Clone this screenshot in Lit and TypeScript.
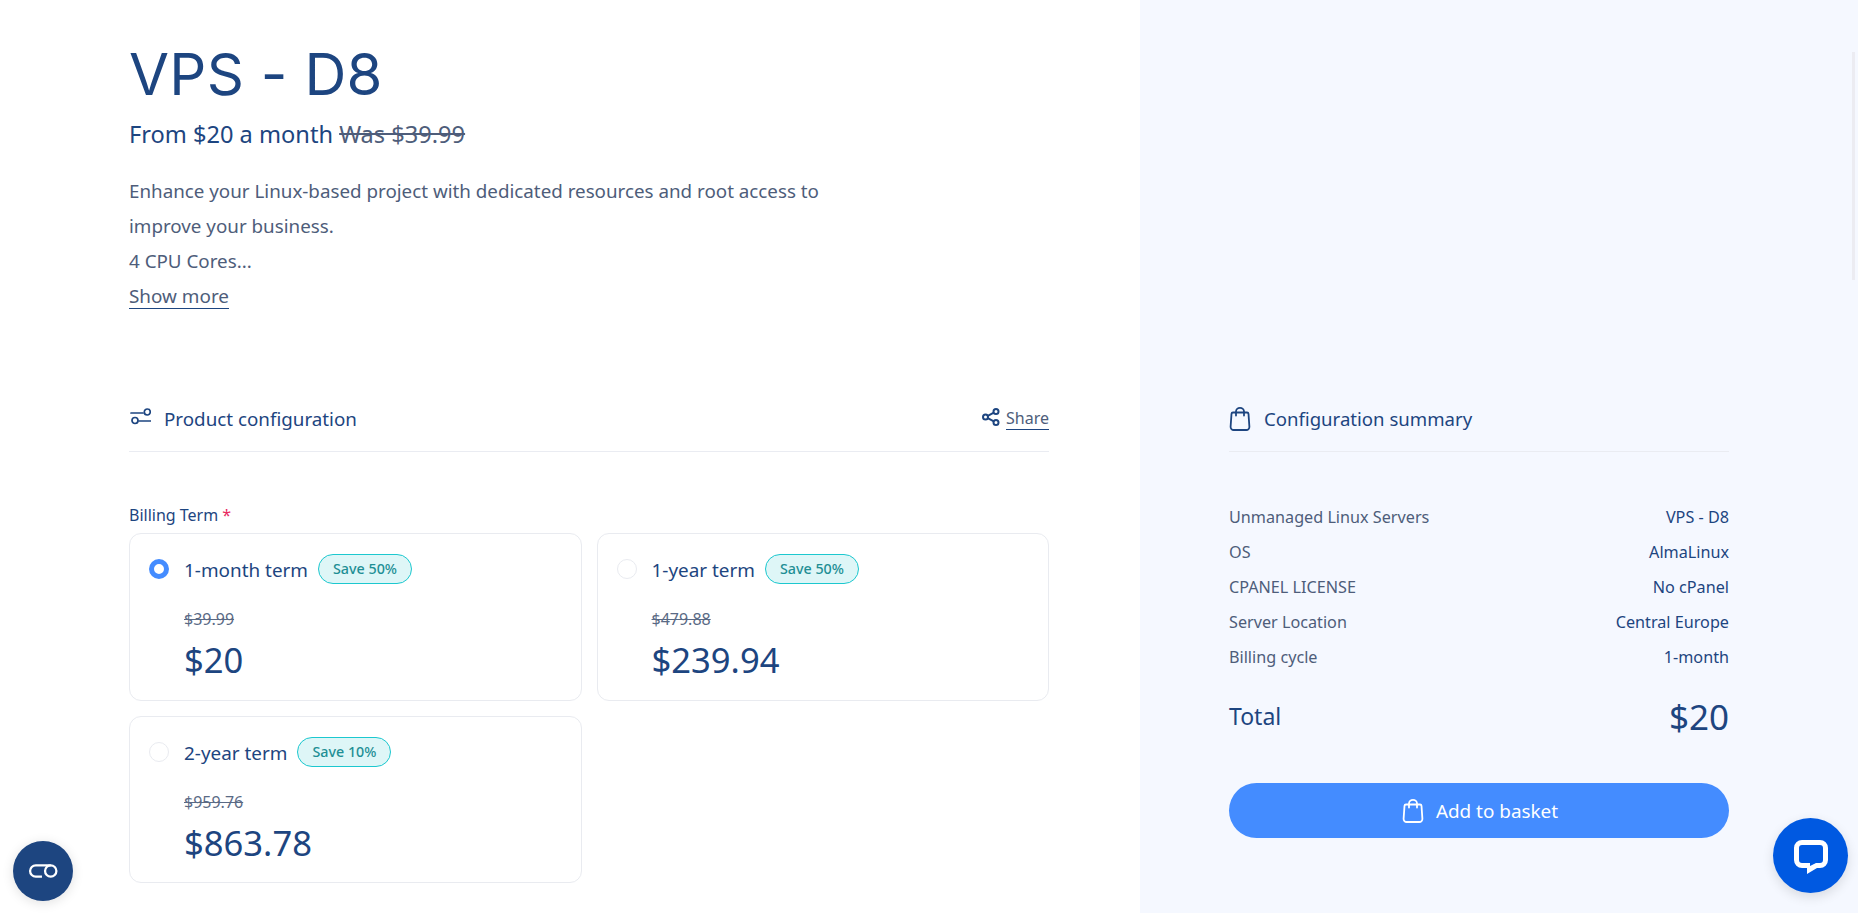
import { LitElement, css, html } from 'lit';
import { customElement } from 'lit/decorators.js';

const bagIcon = html`<svg class="bag" viewBox="0 0 22 24" fill="none" stroke="currentColor" stroke-width="1.8" stroke-linejoin="round" stroke-linecap="round">
  <path d="M4 5.500h14a1.500 1.500 0 0 1 1.500 1.400l.9 13a3 3 0 0 1-3 3.100H4.600a3 3 0 0 1-3-3.100l.9-13A1.500 1.500 0 0 1 4 5.500z" />
  <path d="M7 8.500V4.500a4 3.600 0 0 1 8 0v4" />
</svg>`;

const terms = [
  { name: '1-month term', save: 'Save 50%', was: '$39.99', price: '$20', selected: true },
  { name: '1-year term', save: 'Save 50%', was: '$479.88', price: '$239.94', selected: false },
  { name: '2-year term', save: 'Save 10%', was: '$959.76', price: '$863.78', selected: false },
];

const summary = [
  ['Unmanaged Linux Servers', 'VPS - D8'],
  ['OS', 'AlmaLinux'],
  ['CPANEL LICENSE', 'No cPanel'],
  ['Server Location', 'Central Europe'],
  ['Billing cycle', '1-month'],
];

@customElement('app-root')
export class AppRoot extends LitElement {
  render() {
    return html`
      <div class="page">
        <main class="main">
          <h1>VPS - D8</h1>
          <div class="sub">From $20 a month <s>Was $39.99</s></div>
          <p class="desc">Enhance your Linux-based project with dedicated resources and root access to improve your business.<br />4 CPU Cores...</p>
          <a class="more">Show more</a>

          <div class="section-head">
            <svg class="sliders" viewBox="0 0 21 17" fill="none" stroke="currentColor" stroke-width="1.700" stroke-linecap="round">
              <path d="M1 5h12" />
              <circle cx="17.300" cy="4" r="3" />
              <circle cx="5" cy="12.500" r="3" />
              <path d="M9 13H20.500" />
            </svg>
            <span class="head-title">Product configuration</span>
            <span class="share">
              <svg viewBox="0 0 18 18" fill="none" stroke="currentColor" stroke-width="2">
                <circle cx="14" cy="3.500" r="2.500" />
                <circle cx="3.500" cy="9" r="2.500" />
                <circle cx="14" cy="14.500" r="2.500" />
                <path d="M5.800 7.800l6-3.100M5.800 10.200l6 3.100" />
              </svg>
              <a>Share</a>
            </span>
          </div>

          <div class="field-label">Billing Term <span class="req">*</span></div>
          <div class="terms">
            ${terms.map(
              (t) => html`
                <div class="term">
                  <div class="term-top">
                    <span class="radio ${t.selected ? 'on' : ''}"></span>
                    <span class="term-name">${t.name}</span>
                    <span class="badge">${t.save}</span>
                  </div>
                  <div class="was"><s>${t.was}</s></div>
                  <div class="price">${t.price}</div>
                </div>
              `,
            )}
          </div>
        </main>

        <aside class="side">
          <div class="section-head">
            ${bagIcon}
            <span class="head-title wide">Configuration summary</span>
          </div>
          <div class="rows">
            ${summary.map(
              ([k, v]) => html`<div class="row"><span class="k">${k}</span><span class="v">${v}</span></div>`,
            )}
          </div>
          <div class="total"><span>Total</span><span class="total-price">$20</span></div>
          <button class="add">${bagIcon}<span>Add to basket</span></button>
          <div class="scroll-thumb"></div>
        </aside>
      </div>

      <div class="fab left">
        <svg viewBox="0 0 32 17" fill="none" stroke="currentColor" stroke-width="2.200">
          <path d="M14.500 14H8.500a5.500 5.500 0 0 1 0-11H23" />
          <circle cx="23" cy="8.500" r="5.500" />
        </svg>
      </div>
      <div class="fab chat">
        <svg viewBox="0 0 36 36">
          <path fill="#fff" fill-rule="evenodd" d="M9 1h18a8 8 0 0 1 8 8v12a8 8 0 0 1-8 8h-3l-10 6v-6H9a8 8 0 0 1-8-8V9a8 8 0 0 1 8-8zm0 5a3 3 0 0 0-3 3v12a3 3 0 0 0 3 3h8v3l6-3h4a3 3 0 0 0 3-3V9a3 3 0 0 0-3-3H9z" />
        </svg>
      </div>
    `;
  }

  static styles = css`
    :host {
      display: block;
      font-family: 'Noto Sans', sans-serif;
      color: #1d4580;
    }
    .page {
      display: flex;
      height: 913px;
      overflow: hidden;
    }
    .main {
      width: 1140px;
      box-sizing: border-box;
      padding: 40px 91px 0 129px;
    }
    .side {
      position: relative;
      flex: 1;
      box-sizing: border-box;
      padding: 386px 129px 0 89px;
      background: #f5f8ff;
    }
    h1 {
      margin: 0;
      font-family: Inter, sans-serif;
      font-size: 58px;
      font-weight: 400;
      line-height: 68px;
      letter-spacing: 0.3px;
    }
    .sub {
      margin-top: 9px;
      font-size: 23.600px;
      line-height: 34px;
    }
    .sub s {
      color: #4e5d7a;
    }
    .desc {
      margin: 23px 0 0;
      width: 700px;
      font-size: 18.800px;
      line-height: 35px;
      color: #4e5d7a;
    }
    .more {
      display: inline-block;
      margin-top: 5px;
      font-size: 18.900px;
      line-height: 24px;
      color: #4e5d7a;
      border-bottom: 1px solid #1d4580;
    }
    .section-head {
      display: flex;
      align-items: center;
      height: 66px;
      border-bottom: 1px solid #eaecf2;
      font-size: 18.800px;
      box-sizing: border-box;
    }
    .main .section-head {
      margin-top: 77px;
    }
    .head-title {
      margin-left: 12px;
      line-height: 24px;
    }
    .head-title.wide {
      margin-left: 13px;
      font-size: 18.600px;
    }
    .sliders {
      width: 21px;
      height: 17px;
      margin: -4px 1px 0 1px;
    }
    .bag {
      width: 22px;
      height: 24px;
    }
    .share {
      margin-left: auto;
      display: flex;
      align-items: center;
      gap: 6px;
      font-size: 16px;
      color: #4e5d7a;
    }
    .share svg {
      width: 18px;
      height: 18px;
      color: #1d4580;
      margin-top: -4px;
    }
    .share a {
      border-bottom: 1px solid #1d4580;
      line-height: 22px;
    }
    .field-label {
      margin-top: 51px;
      font-size: 16px;
      line-height: 24px;
    }
    .req {
      color: #e8295f;
    }
    .terms {
      display: grid;
      grid-template-columns: 1fr 1fr;
      grid-template-rows: 168px 167px;
      gap: 15px;
      margin-top: 6px;
    }
    .term {
      box-sizing: border-box;
      padding: 20px 19px 0;
      border: 1px solid #e9ebf0;
      border-radius: 12px;
      background: #fff;
    }
    .term-top {
      display: flex;
      align-items: center;
      height: 30px;
    }
    .radio {
      width: 20px;
      height: 20px;
      box-sizing: border-box;
      border: 1px solid #e9ebf0;
      border-radius: 50%;
      background: #fff;
    }
    .radio.on {
      border: 5.500px solid #448cff;
    }
    .term-name {
      margin-left: 15px;
      font-size: 18.900px;
      line-height: 24px;
      padding-top: 2px;
    }
    .badge {
      margin-left: 10px;
      height: 30px;
      box-sizing: border-box;
      padding: 0 14px;
      border: 1px solid #1cc8cf;
      border-radius: 15px;
      background: #def6f7;
      color: #1f8f95;
      font-size: 14.300px;
      font-weight: 500;
      line-height: 28px;
    }
    .was {
      margin: 23px 0 0 35px;
      font-size: 16px;
      line-height: 24px;
      color: #5a6a85;
    }
    .price {
      margin: 6px 0 0 35px;
      font-size: 34.600px;
      line-height: 46px;
    }
    .rows {
      margin-top: 47px;
    }
    .row,
    .total {
      display: flex;
      justify-content: space-between;
      align-items: center;
    }
    .row {
      height: 35px;
      font-size: 16.200px;
    }
    .k {
      color: #4e5d7a;
    }
    .total {
      margin-top: 19px;
      height: 46px;
      font-size: 23px;
    }
    .total-price {
      font-size: 35px;
    }
    .add {
      display: flex;
      align-items: center;
      justify-content: center;
      gap: 12px;
      width: 100%;
      height: 55px;
      margin-top: 44px;
      padding: 0 0 0 2px;
      border: 0;
      border-radius: 28px;
      background: #448cff;
      color: #fff;
      font-family: inherit;
      font-size: 18.900px;
    }
    .scroll-thumb {
      position: absolute;
      top: 52px;
      right: 3px;
      width: 3px;
      height: 228px;
      background: #ececf2;
    }
    .fab {
      position: fixed;
      display: flex;
      align-items: center;
      justify-content: center;
      border-radius: 50%;
      color: #fff;
    }
    .fab.left {
      left: 13px;
      top: 841px;
      width: 60px;
      height: 60px;
      background: #1d4580;
      box-shadow: 0 2px 12px rgba(0, 0, 0, 0.12);
    }
    .fab.left svg {
      width: 33px;
      height: 18px;
    }
    .fab.chat {
      left: 1773px;
      top: 818px;
      width: 75px;
      height: 75px;
      background: #0059e1;
      box-shadow: 0 4px 12px rgba(0, 0, 0, 0.12);
    }
    .fab.chat svg {
      width: 36px;
      height: 36px;
      margin-top: 2px;
    }
  `;
}

declare global {
  interface HTMLElementTagNameMap {
    'app-root': AppRoot;
  }
}
